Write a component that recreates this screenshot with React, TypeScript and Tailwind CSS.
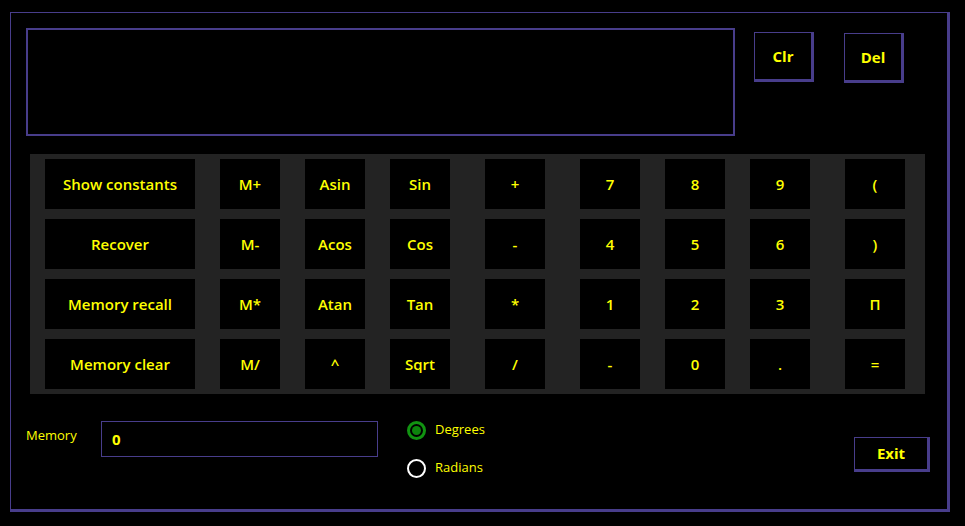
import React from "react";

const rows: string[][] = [
  ["Show constants", "M+", "Asin", "Sin", "+", "7", "8", "9", "("],
  ["Recover", "M-", "Acos", "Cos", "-", "4", "5", "6", ")"],
  ["Memory recall", "M*", "Atan", "Tan", "*", "1", "2", "3", "П"],
  ["Memory clear", "M/", "^", "Sqrt", "/", "-", "0", ".", "="],
];

const font = { fontFamily: '"Open Sans", "Noto Sans", sans-serif' };

function KeyButton({ label, wide }: { label: string; wide?: boolean }) {
  return (
    <button
      className={`h-[50px] ${wide ? "w-[150px]" : "w-[60px]"} bg-black text-[#ffff00] text-[15px] font-semibold flex items-center justify-center`}
    >
      {label}
    </button>
  );
}

function EditButton({ label, className }: { label: string; className: string }) {
  return (
    <button
      className={`bg-black text-[#ffff00] text-[15px] font-bold border-[#483d8b] border-l border-t border-r-[3px] border-b-[3px] flex items-center justify-center ${className}`}
    >
      {label}
    </button>
  );
}

function Radio({ label, checked }: { label: string; checked?: boolean }) {
  return (
    <div className="flex items-center h-[20px]">
      {checked ? (
        <span className="w-[19px] h-[19px] rounded-full border-[3px] border-[#119311] flex items-center justify-center">
          <span className="w-[9px] h-[9px] rounded-full bg-[#0c840c]" />
        </span>
      ) : (
        <span className="w-[19px] h-[19px] rounded-full border-2 border-white" />
      )}
      <span className="ml-[9px] text-[13px] text-[#ffff00]">{label}</span>
    </div>
  );
}

export default function App() {
  return (
    <div className="w-[965px] h-[526px] bg-black pt-[12px] pl-[10px]" style={font}>
      <div className="w-[940px] h-[500px] border-[#483d8b] border-l border-t border-r-[3px] border-b-[3px] flex flex-col">
        {/* display + clear/delete */}
        <div className="flex items-start">
          <div className="ml-[15px] mt-[15px] w-[709px] h-[108px] border-2 border-[#483d8b] bg-black" />
          <EditButton label="Clr" className="ml-[19px] mt-[19px] w-[60px] h-[50px]" />
          <EditButton label="Del" className="ml-[30px] mt-[20px] w-[60px] h-[50px]" />
        </div>

        {/* keypad */}
        <div className="ml-[19px] mt-[18px] w-[895px] h-[240px] bg-[#232323] pl-[15px] py-[5px] grid grid-cols-[175px_85px_85px_95px_95px_85px_85px_95px_80px] grid-rows-[50px_50px_50px_50px] gap-y-[10px]">
          {rows.map((row, r) =>
            row.map((label, c) => <KeyButton key={`${r}-${c}`} label={label} wide={c === 0} />)
          )}
        </div>

        {/* memory, angle mode, exit */}
        <div className="flex items-start">
          <span className="ml-[15px] mt-[32px] w-[75px] text-[13px] leading-[18px] text-[#ffff00]">Memory</span>
          <div className="mt-[27px] w-[277px] h-[36px] border border-[#483d8b] flex items-center pl-[10px] text-[#ffff00] text-[15px] font-bold">
            0
          </div>
          <div className="ml-[29px] mt-[26px] flex flex-col gap-[18px]">
            <Radio label="Degrees" checked />
            <Radio label="Radians" />
          </div>
          <EditButton label="Exit" className="ml-auto mr-[17px] mt-[43px] w-[76px] h-[35px]" />
        </div>
      </div>
    </div>
  );
}
